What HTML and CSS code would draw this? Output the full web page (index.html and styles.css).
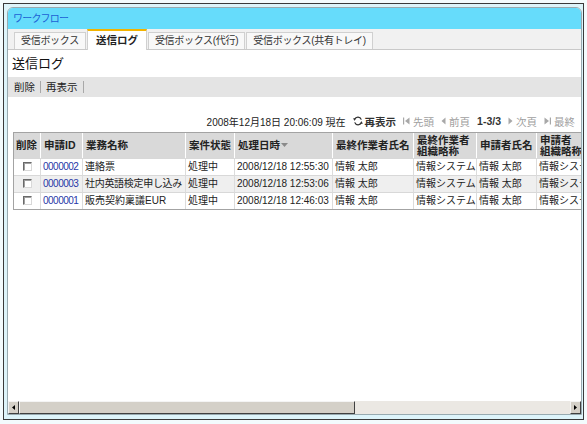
FILE: index.html
```html
<!DOCTYPE html>
<html lang="ja">
<head>
<meta charset="utf-8">
<title>ワークフロー</title>
<link rel="stylesheet" href="styles.css">
</head>
<body>
<div class="frame">
  <div class="panel">
    <div class="titlebar">ワークフロー</div>
    <div class="tabs">
      <div class="tab">受信ボックス</div>
      <div class="tab active">送信ログ</div>
      <div class="tab">受信ボックス(代行)</div>
      <div class="tab">受信ボックス(共有トレイ)</div>
    </div>
    <div class="content">
      <h1 class="heading">送信ログ</h1>
      <div class="toolbar">
        <span class="tool">削除</span><span class="tool">再表示</span>
      </div>
      <div class="listarea">
        <div class="pager">
          <span class="now">2008年12月18日 20:06:09 現在</span>
          <span class="refresh">
            <svg class="ic-refresh" width="10" height="10" viewBox="0 0 10 10">
              <path d="M8.3 3.6 A3.6 3.6 0 0 0 1.6 3.4" fill="none" stroke="#333" stroke-width="1.3"/>
              <path d="M0.2 2.2 L2.8 2.2 L1.4 5 Z" fill="#333"/>
              <path d="M1.7 6.4 A3.6 3.6 0 0 0 8.4 6.6" fill="none" stroke="#333" stroke-width="1.3"/>
              <path d="M9.8 7.8 L7.2 7.8 L8.6 5 Z" fill="#333"/>
            </svg>再表示</span>
          <span class="nav dis"><svg width="7" height="8" viewBox="0 0 7 8"><rect x="0" y="0.5" width="1.2" height="7" fill="#a8a8a8"/><path d="M6.5 0.5 L2 4 L6.5 7.5 Z" fill="#a8a8a8"/></svg>先頭</span>
          <span class="nav dis"><svg width="5" height="8" viewBox="0 0 5 8"><path d="M4.5 0.5 L0.5 4 L4.5 7.5 Z" fill="#a8a8a8"/></svg>前頁</span>
          <span class="count">1-3/3</span>
          <span class="nav dis"><svg width="5" height="8" viewBox="0 0 5 8"><path d="M0.5 0.5 L4.5 4 L0.5 7.5 Z" fill="#a8a8a8"/></svg>次頁</span>
          <span class="nav dis"><svg width="7" height="8" viewBox="0 0 7 8"><path d="M0.5 0.5 L5 4 L0.5 7.5 Z" fill="#a8a8a8"/><rect x="5.8" y="0.5" width="1.2" height="7" fill="#a8a8a8"/></svg>最終</span>
        </div>
        <table class="grid">
          <colgroup>
            <col class="c-del"><col class="c-id"><col class="c-name"><col class="c-state"><col class="c-date">
            <col class="c-last"><col class="c-lastorg"><col class="c-app"><col class="c-apporg">
          </colgroup>
          <thead>
            <tr>
              <th>削除</th>
              <th>申請ID</th>
              <th>業務名称</th>
              <th>案件状態</th>
              <th>処理日時<svg class="sort" width="7" height="4" viewBox="0 0 7 4"><path d="M0 0 L7 0 L3.5 4 Z" fill="#8a8a8a"/></svg></th>
              <th>最終作業者氏名</th>
              <th>最終作業者<br>組織略称</th>
              <th>申請者氏名</th>
              <th>申請者<br>組織略称</th>
            </tr>
          </thead>
          <tbody>
            <tr>
              <td class="chk"><span class="cb"></span></td>
              <td><a class="id">0000002</a></td>
              <td>連絡票</td>
              <td>処理中</td>
              <td>2008/12/18 12:55:30</td>
              <td>情報 太郎</td>
              <td>情報システム</td>
              <td>情報 太郎</td>
              <td>情報システム</td>
            </tr>
            <tr class="alt">
              <td class="chk"><span class="cb"></span></td>
              <td><a class="id">0000003</a></td>
              <td class="tight">社内英語検定申し込み</td>
              <td>処理中</td>
              <td>2008/12/18 12:53:06</td>
              <td>情報 太郎</td>
              <td>情報システム</td>
              <td>情報 太郎</td>
              <td>情報システム</td>
            </tr>
            <tr>
              <td class="chk"><span class="cb"></span></td>
              <td><a class="id">0000001</a></td>
              <td>販売契約稟議EUR</td>
              <td>処理中</td>
              <td>2008/12/18 12:46:03</td>
              <td>情報 太郎</td>
              <td>情報システム</td>
              <td>情報 太郎</td>
              <td>情報システム</td>
            </tr>
          </tbody>
        </table>
      </div>
    </div>
    <div class="hscroll">
      <div class="sb-btn"><svg width="3" height="5" viewBox="0 0 3 5"><path d="M3 0 L0 2.5 L3 5 Z" fill="#000"/></svg></div>
      <div class="sb-thumb"></div>
      <div class="sb-track"></div>
      <div class="sb-btn"><svg width="3" height="5" viewBox="0 0 3 5"><path d="M0 0 L3 2.5 L0 5 Z" fill="#000"/></svg></div>
    </div>
  </div>
</div>
</body>
</html>
```

FILE: styles.css
```css
html, body {
  margin: 0;
  padding: 0;
}
body {
  background: #f3fbfd;
  font-family: "Liberation Sans", "Noto Sans CJK JP", sans-serif;
  font-size: 10px;
  color: #222;
}
.frame {
  box-sizing: border-box;
  width: 581px;
  height: 417px;
  margin: 3px;
  border: 1px solid #3a3a3a;
  background: #ddf4fa;
  padding: 3px 1px 4px 3px;
  display: flex;
}
.panel {
  flex: 1;
  min-width: 0;
  display: flex;
  flex-direction: column;
  background: #fff;
  border: 1px solid #98aab0;
  border-radius: 6px 6px 0 0;
  overflow: hidden;
}
.titlebar {
  height: 21px;
  line-height: 21px;
  background: #66dcfb;
  color: #1c5fd4;
  padding-left: 5px;
  font-size: 10px;
  letter-spacing: -0.8px;
}
.tabs {
  height: 20px;
  background: #f1f1f1;
  border-bottom: 1px solid #c9c9c9;
  display: flex;
  align-items: flex-end;
  padding-left: 6px;
  gap: 1px;
}
.tab {
  box-sizing: border-box;
  height: 17px;
  line-height: 15px;
  padding: 0 6px;
  text-align: center;
  white-space: nowrap;
  background: #f8f8f8;
  border: 1px solid #d0d0d0;
  border-bottom: none;
  color: #333;
  font-size: 10px;
  letter-spacing: -0.3px;
}
.tab.active {
  height: 21px;
  line-height: 18px;
  margin-bottom: -1px;
  padding: 0 8px;
  background: #fff;
  border-top: 2px solid #f3b300;
  font-weight: bold;
  color: #222;
  font-size: 10.5px;
  letter-spacing: 0;
}
.content {
  flex: 1;
  min-height: 0;
  display: flex;
  flex-direction: column;
  overflow: hidden;
}
.heading {
  margin: 0;
  height: 27px;
  line-height: 27px;
  padding-left: 4px;
  font-size: 13px;
  font-weight: normal;
  color: #111;
}
.toolbar {
  height: 20px;
  background: #e4e4e4;
  padding-left: 1px;
  display: flex;
  align-items: center;
  font-size: 10.5px;
}
.tool {
  padding: 0 5px;
  line-height: 12px;
  border-right: 1px solid #a8a8a8;
  color: #222;
}
.listarea {
  flex: 1;
  min-height: 0;
  overflow: hidden;
  padding-left: 5px;
}
.pager {
  margin-top: 16px;
  height: 16px;
  display: flex;
  justify-content: flex-end;
  align-items: center;
  padding-right: 6px;
  gap: 7px;
  white-space: nowrap;
  color: #222;
  font-size: 10.5px;
}
.now {
  font-size: 10px;
}
.refresh {
  display: flex;
  align-items: center;
  gap: 2px;
  font-weight: bold;
  color: #333;
}
.nav {
  display: flex;
  align-items: center;
  gap: 3px;
}
.nav.dis {
  color: #a0a0a0;
}
.count {
  font-weight: bold;
  color: #333;
}
.grid {
  margin-top: 3px;
  border-collapse: separate;
  border-spacing: 0;
  table-layout: fixed;
  width: 613px;
  border: 1px solid #a3a3a3;
}
.c-del { width: 27px; }
.c-id { width: 42px; }
.c-name { width: 103px; }
.c-state { width: 49px; }
.c-date { width: 98px; }
.c-last { width: 81px; }
.c-lastorg { width: 63px; }
.c-app { width: 60px; }
.c-apporg { width: 90px; }
.grid th {
  background: #d9d9d9;
  height: 25px;
  padding: 0 0 0 3px;
  border-right: 1px solid #fff;
  text-align: left;
  vertical-align: middle;
  font-size: 10.5px;
  line-height: 11px;
  font-weight: bold;
  color: #222;
  white-space: nowrap;
  overflow: hidden;
}
.grid th:first-child {
  padding-left: 2px;
}
.sort {
  margin-left: 1px;
  vertical-align: 2px;
}
.grid td {
  height: 16px;
  padding: 0 0 0 2px;
  border-top: 1px solid #d8d8d8;
  border-right: 1px solid #dcdcdc;
  white-space: nowrap;
  overflow: hidden;
  line-height: 16px;
  color: #222;
}
.grid td.tight {
  letter-spacing: -0.3px;
}
.grid tr.alt td {
  background: #efefef;
}
.grid td.chk {
  padding: 0;
  text-align: center;
}
.cb {
  display: inline-block;
  box-sizing: border-box;
  width: 9px;
  height: 9px;
  vertical-align: -1px;
  background: #fff;
  border: 1px solid;
  border-color: #6a6a6a #d8d8d8 #d8d8d8 #6a6a6a;
  box-shadow: inset 1px 1px 0 #a0a0a0;
}
.id {
  color: #2838a8;
  text-decoration: none;
  letter-spacing: -0.5px;
}
.hscroll {
  height: 13px;
  display: flex;
  background: #ebe8e3;
}
.sb-btn {
  box-sizing: border-box;
  width: 11px;
  height: 13px;
  background: #d4d0c8;
  border: 1px solid;
  border-color: #f4f4f4 #404040 #404040 #f4f4f4;
  display: flex;
  align-items: center;
  justify-content: center;
}
.sb-thumb {
  box-sizing: border-box;
  width: 336px;
  height: 13px;
  background: #d4d0c8;
  border: 1px solid;
  border-color: #f4f4f4 #404040 #404040 #f4f4f4;
}
.sb-track {
  flex: 1;
  background: #ebe8e3;
}
```
